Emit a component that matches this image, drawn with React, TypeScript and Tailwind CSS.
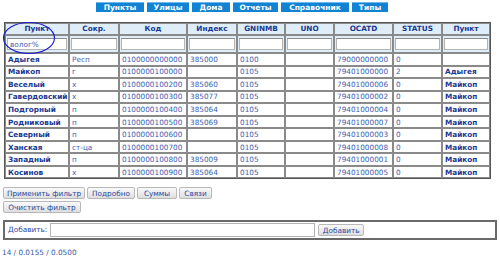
import React from "react";

const tabs = [
  { label: "Пункты", w: "w-[48px]" },
  { label: "Улицы", w: "w-[42px]" },
  { label: "Дома", w: "w-[38px]" },
  { label: "Отчеты", w: "w-[45px]" },
  { label: "Справочник", w: "w-[68px]" },
  { label: "Типы", w: "w-[36px]" },
];

const columns = [
  { title: "Пункт", w: "w-[64px]" },
  { title: "Сокр.", w: "w-[50px]" },
  { title: "Код", w: "w-[68px]" },
  { title: "Индекс", w: "w-[50px]" },
  { title: "GNINMB", w: "w-[48px]" },
  { title: "UNO", w: "w-[49px]" },
  { title: "OCATD", w: "w-[59px]" },
  { title: "STATUS", w: "w-[49px]" },
  { title: "Пункт", w: "w-[48px]" },
];

type Row = [string, string, string, string, string, string, string, string, string];

const rows: Row[] = [
  ["Адыгея", "Респ", "0100000000000", "385000", "0100", "", "79000000000", "0", ""],
  ["Майкоп", "г", "0100000100000", "", "0105", "", "79401000000", "2", "Адыгея"],
  ["Веселый", "х", "0100000100200", "385060", "0105", "", "79401000006", "0", "Майкоп"],
  ["Гавердовский", "х", "0100000100300", "385077", "0105", "", "79401000002", "0", "Майкоп"],
  ["Подгорный", "п", "0100000100400", "385064", "0105", "", "79401000004", "0", "Майкоп"],
  ["Родниковый", "п", "0100000100500", "385069", "0105", "", "79401000007", "0", "Майкоп"],
  ["Северный", "п", "0100000100600", "", "0105", "", "79401000003", "0", "Майкоп"],
  ["Ханская", "ст-ца", "0100000100700", "", "0105", "", "79401000008", "0", "Майкоп"],
  ["Западный", "п", "0100000100800", "385009", "0105", "", "79401000001", "0", "Майкоп"],
  ["Косинов", "х", "0100000100900", "385064", "0105", "", "79401000005", "0", "Майкоп"],
];

const Btn = ({ label, w }: { label: string; w: string }) => (
  <button
    className={`${w} h-[12px] border border-[#b8b8b8] rounded-[2px] bg-gradient-to-b from-[#fafafa] to-[#dedede] text-[#2a4aa0] text-[7.3px] leading-none px-0`}
  >
    {label}
  </button>
);

export default function App() {
  return (
    <div className="relative w-[500px] h-[259px] bg-white overflow-hidden font-['DejaVu_Sans',sans-serif] text-[7.3px] text-[#4060b0]">
      <div className="flex gap-[3px] pl-[96px] pt-[2px]">
        {tabs.map((t) => (
          <div
            key={t.label}
            className={`${t.w} h-[10px] bg-[#1282d2] border-t border-[#6ab8ee] text-white font-bold text-[7.5px] leading-[9px] text-center`}
          >
            {t.label}
          </div>
        ))}
      </div>

      <table className="ml-[4px] mt-[10px] w-[487px] table-fixed border-separate border-spacing-0 border border-[#555]">
        <colgroup>
          {columns.map((c, i) => (
            <col key={i} className={c.w} />
          ))}
        </colgroup>
        <thead>
          <tr className="h-[12px] bg-[#dfedf8]">
            {columns.map((c, i) => (
              <th
                key={i}
                className="border border-[#8a8a8a] p-0 text-center font-bold text-[#1a3890] text-[7.3px] leading-[10px]"
              >
                {c.title}
              </th>
            ))}
          </tr>
          <tr className="h-[18px] bg-[#dfedf8]">
            {columns.map((c, i) => (
              <th key={i} className="border border-[#8a8a8a] px-[1px] py-0 text-left">
                <input
                  readOnly
                  defaultValue={i === 0 ? "волог%" : ""}
                  className="block w-full h-[12px] border border-[#b4b4b4] border-t-[#8c8c8c] bg-white px-[2px] text-[7.3px] font-normal text-[#4060b0] outline-none"
                />
              </th>
            ))}
          </tr>
        </thead>
        <tbody>
          {rows.map((r, ri) => (
            <tr key={ri} className="h-[12.55px]">
              {r.map((v, ci) => (
                <td
                  key={ci}
                  className={`border border-[#8a8a8a] px-[2px] py-0 leading-[9px] whitespace-nowrap overflow-hidden ${
                    ci === 0 || ci === 8 ? "font-bold text-[#1a3890]" : ""
                  }`}
                >
                  {v}
                </td>
              ))}
            </tr>
          ))}
        </tbody>
      </table>

      <div className="flex flex-col gap-[2px] pl-[3px] mt-[8px]">
        <div className="flex gap-[2px]">
          <Btn label="Применить фильтр" w="w-[82px]" />
          <Btn label="Подробно" w="w-[48px]" />
          <Btn label="Суммы" w="w-[40px]" />
          <Btn label="Связи" w="w-[33px]" />
        </div>
        <div className="flex">
          <Btn label="Очистить фильтр" w="w-[78px]" />
        </div>
      </div>

      <div className="ml-[3px] mt-[7px] w-[494px] h-[20px] border-2 border-[#6a6a6a] flex items-center gap-[3px] pl-[3px]">
        <span className="text-[7.3px] text-[#2a4aa0]">Добавить:</span>
        <input readOnly className="w-[265px] h-[14px] border border-[#b4b4b4] bg-white outline-none" />
        <Btn label="Добавить" w="w-[46px]" />
      </div>

      <div className="pl-[2px] mt-[8px] text-[7.3px] text-[#3858a8]">14 / 0.0155 / 0.0500</div>

      <svg className="absolute left-[2px] top-[21px]" width="54" height="34" viewBox="0 0 54 34">
        <ellipse cx="27" cy="17" rx="25.5" ry="15.5" fill="none" stroke="#1f1fd0" strokeWidth="1.2" />
      </svg>
    </div>
  );
}
